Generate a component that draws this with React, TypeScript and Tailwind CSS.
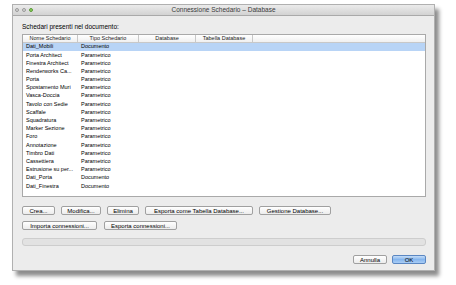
const rows: [string, string][] = [
  ["Dati_Mobili", "Documento"],
  ["Porta Architect", "Parametrico"],
  ["Finestra Architect", "Parametrico"],
  ["Renderworks Ca...", "Parametrico"],
  ["Porta", "Parametrico"],
  ["Spostamento Muri", "Parametrico"],
  ["Vasca-Doccia", "Parametrico"],
  ["Tavolo con Sedie", "Parametrico"],
  ["Scaffale", "Parametrico"],
  ["Squadratura", "Parametrico"],
  ["Marker Sezione", "Parametrico"],
  ["Foro", "Parametrico"],
  ["Annotazione", "Parametrico"],
  ["Timbro Dati", "Parametrico"],
  ["Cassettiera", "Parametrico"],
  ["Estrusione su per...", "Parametrico"],
  ["Dati_Porta", "Documento"],
  ["Dati_Finestra", "Documento"],
];

const columns = [
  { label: "Nome Schedario", w: "w-[55px]" },
  { label: "Tipo Schedario", w: "w-[61px]" },
  { label: "Database", w: "w-[57px]" },
  { label: "Tabella Database", w: "w-[57px]" },
];

const Btn = ({ label, w }: { label: string; w: string }) => (
  <div
    className={`flex h-[9px] ${w} items-center justify-center rounded-[2px] border border-[#a0a0a0] bg-gradient-to-b from-white to-[#ececec] text-[6px] leading-none text-black`}
  >
    {label}
  </div>
);

export default function App() {
  return (
    <div className="h-[285px] w-[456px] bg-white font-['Liberation_Sans',Arial,sans-serif]">
      <div className="ml-[12px] pt-[4px]">
        <div className="flex h-[267px] w-[423px] flex-col border border-[#b0b0b0] bg-[#ececec] shadow-[4px_5px_4px_rgba(0,0,0,0.45)]">
          {/* title bar */}
          <div className="relative flex h-[11px] items-center justify-center border-b border-[#a9a9a9] bg-gradient-to-b from-[#ebebeb] to-[#d2d2d2]">
            <div className="absolute left-[2px] top-[3px] flex gap-[3px]">
              <span className="h-[4px] w-[4px] rounded-full border border-[#9a9a9a] bg-[#d6d6d6]" />
              <span className="h-[4px] w-[4px] rounded-full border border-[#9a9a9a] bg-[#d6d6d6]" />
              <span className="h-[4px] w-[4px] rounded-full border border-[#5b9a3a] bg-[#8ccf5c]" />
            </div>
            <span className="text-[6.5px] leading-none text-[#3a3a3a]">
              Connessione Schedario – Database
            </span>
          </div>

          <div className="flex flex-1 flex-col pl-[9px] pr-[8px]">
            <div className="mt-[6px] h-[10px] text-[6.5px] leading-[10px] text-black">
              Schedari presenti nel documento:
            </div>

            {/* table */}
            <div className="mt-[2px] h-[163px] border border-[#a9a9a9] bg-white">
              <div className="flex h-[8px] border-b border-[#c8c8c8] bg-gradient-to-b from-white to-[#f0f0f0]">
                {columns.map((c) => (
                  <div
                    key={c.label}
                    className={`${c.w} flex items-center justify-center border-r border-[#c8c8c8] text-[5.5px] leading-none text-[#222]`}
                  >
                    {c.label}
                  </div>
                ))}
              </div>
              {rows.map(([name, type], i) => (
                <div
                  key={name}
                  className={`flex h-[8.2px] items-center text-[5.5px] leading-none text-black ${
                    i === 0 ? "bg-[#b8d4f6]" : ""
                  }`}
                >
                  <span className="w-[55px] pl-[3px]">{name}</span>
                  <span className="pl-[3px]">{type}</span>
                </div>
              ))}
            </div>

            {/* action buttons */}
            <div className="mt-[9px] flex gap-[6px]">
              <Btn label="Crea..." w="w-[33px]" />
              <Btn label="Modifica..." w="w-[40px]" />
              <Btn label="Elimina" w="w-[32px]" />
              <Btn label="Esporta come Tabella Database..." w="w-[108px]" />
              <Btn label="Gestione Database..." w="w-[72px]" />
            </div>
            <div className="mt-[6px] flex gap-[7px]">
              <Btn label="Importa connessioni..." w="w-[75px]" />
              <Btn label="Esporta connessioni..." w="w-[73px]" />
            </div>

            {/* progress bar */}
            <div className="mt-[8px] h-[8px] rounded-[3px] border border-[#cdcdcd] bg-[#e2e2e2]" />

            {/* dialog buttons */}
            <div className="mt-[9px] flex justify-end gap-[5px]">
              <Btn label="Annulla" w="w-[34px]" />
              <div className="flex h-[9px] w-[34px] items-center justify-center rounded-[2px] border border-[#5b87c2] bg-gradient-to-b from-[#c4dcf7] via-[#86b6ee] to-[#a9cdf5] text-[6px] leading-none text-black">
                OK
              </div>
            </div>
          </div>
        </div>
      </div>
    </div>
  );
}
